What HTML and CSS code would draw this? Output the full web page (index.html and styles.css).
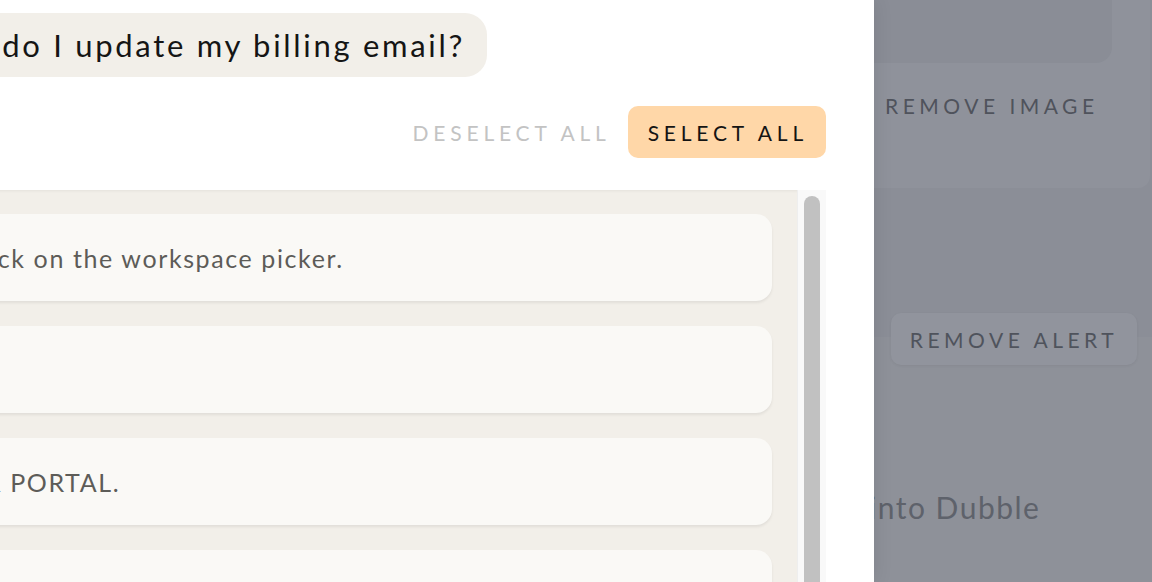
FILE: index.html
```html
<!DOCTYPE html>
<html lang="en">
<head>
<meta charset="utf-8">
<title>Select answers</title>
<link rel="stylesheet" href="styles.css">
</head>
<body>
<div class="stage">
  <div class="modal">
    <div class="chat">
      <div class="bubble">How do I update my billing email?</div>
    </div>
    <div class="actions">
      <button class="btn ghost">Deselect all</button>
      <button class="btn primary">Select all</button>
    </div>
    <div class="list-wrap">
      <div class="list">
        <div class="card"><span class="check"></span><span class="card-text">To switch workspaces, click on the workspace picker.</span></div>
        <div class="card"><span class="check"></span><span class="card-text">Open Settings.</span></div>
        <div class="card"><span class="check"></span><span class="card-text">Go, open the CUSTOMER PORTAL.</span></div>
        <div class="card"><span class="check"></span><span class="card-text">Update the email.</span></div>
      </div>
      <div class="scrollbar"><div class="thumb"></div></div>
    </div>
  </div>
  <div class="page">
    <div class="panel-top">
      <div class="inner-card"></div>
      <div class="page-label">Remove image</div>
    </div>
    <div class="panel-mid">
      <button class="page-btn">Remove alert</button>
      <div class="page-title">into Dubble</div>
    </div>
  </div>
</div>
</body>
</html>
```
FILE: styles.css
```css
* { box-sizing: border-box; margin: 0; padding: 0; }
html, body { width: 1152px; height: 582px; overflow: hidden; }
body { font-family: "Lato", "Noto Sans", sans-serif; background: #8c8f98; }

.stage { display: flex; width: 1152px; height: 582px; overflow: hidden; }

.modal {
  flex: 0 0 auto;
  width: 1278px;
  margin-left: -404px;
  background: #ffffff;
  padding: 13px 48px 0 0;
  display: flex;
  flex-direction: column;
  position: relative;
  z-index: 1;
  box-shadow: 0 0 18px rgba(0, 0, 0, 0.10);
}

.chat { width: 891px; display: flex; justify-content: flex-end; }
.bubble {
  background: #f2efe9;
  border-radius: 22px;
  padding: 14px 22px 14px 24px;
  font-size: 31px;
  letter-spacing: 2.7px;
  line-height: 36px;
  color: #151515;
  white-space: nowrap;
}

.actions {
  display: flex;
  justify-content: flex-end;
  align-items: center;
  gap: 17px;
  margin-top: 29px;
}
.btn {
  font-family: inherit;
  font-size: 21px;
  letter-spacing: 4.8px;
  text-transform: uppercase;
  border: 0;
  border-radius: 10px;
  height: 52px;
  padding: 0 18px 0 20px;
}
.ghost { background: none; color: #c3c3c3; padding: 0; }
.primary { background: #ffd7a8; color: #141414; }

.list-wrap {
  margin-top: 32px;
  flex: 1;
  display: flex;
  background: #f2efe9;
  box-shadow: inset 0 3px 3px -2px rgba(0, 0, 0, 0.06);
}
.list {
  flex: 1;
  display: flex;
  flex-direction: column;
  gap: 25px;
  padding: 24px 25px 0 24px;
}
.card {
  flex: 0 0 87px;
  height: 87px;
  background: #faf9f6;
  border-radius: 16px;
  box-shadow: 0 2px 3px rgba(0, 0, 0, 0.07);
  display: flex;
  align-items: center;
  padding-left: 24px;
  font-size: 25px;
  letter-spacing: 1.6px;
  color: #5d5c58;
  white-space: nowrap;
}
.check { width: 22px; height: 22px; border: 2px solid #c9c6bf; border-radius: 6px; margin-right: 18px; }

.scrollbar {
  flex: 0 0 29px;
  background: #f9f9f9;
  border-left: 1px solid #eeeeee;
  padding: 6px 6px 0 6px;
}
.thumb { height: 100%; background: #c1c1c1; border-radius: 8px 8px 0 0; }

.page {
  flex: 1;
  display: flex;
  flex-direction: column;
  overflow: hidden;
  background: #8b8e97;
}
.panel-top {
  height: 188px;
  background: #8f929b;
  border-radius: 0 0 12px 0;
  margin-right: 2px;
}
.inner-card {
  width: 238px;
  height: 63px;
  background: #8a8d96;
  border-radius: 0 0 16px 0;
}
.page-label {
  margin: 31px 0 0 11px;
  font-size: 21px;
  letter-spacing: 4.5px;
  text-transform: uppercase;
  color: #4f535c;
  line-height: 24px;
  white-space: nowrap;
}
.panel-mid {
  margin-top: 149px;
  flex: 1;
  background: #8e9199;
  display: flex;
  flex-direction: column;
}
.page-btn {
  align-self: flex-start;
  margin: -24px 0 0 17px;
  height: 52px;
  width: 246px;
  border: 0;
  border-radius: 10px;
  background: #91949d;
  box-shadow: 0 1px 3px rgba(0, 0, 0, 0.06);
  font-family: inherit;
  font-size: 21px;
  letter-spacing: 4.5px;
  text-transform: uppercase;
  color: #4f535c;
  white-space: nowrap;
}
.page-title {
  margin: 124px 0 0 -5px;
  font-size: 30px;
  letter-spacing: 1.5px;
  line-height: 36px;
  color: #5e626b;
  white-space: nowrap;
}
```
